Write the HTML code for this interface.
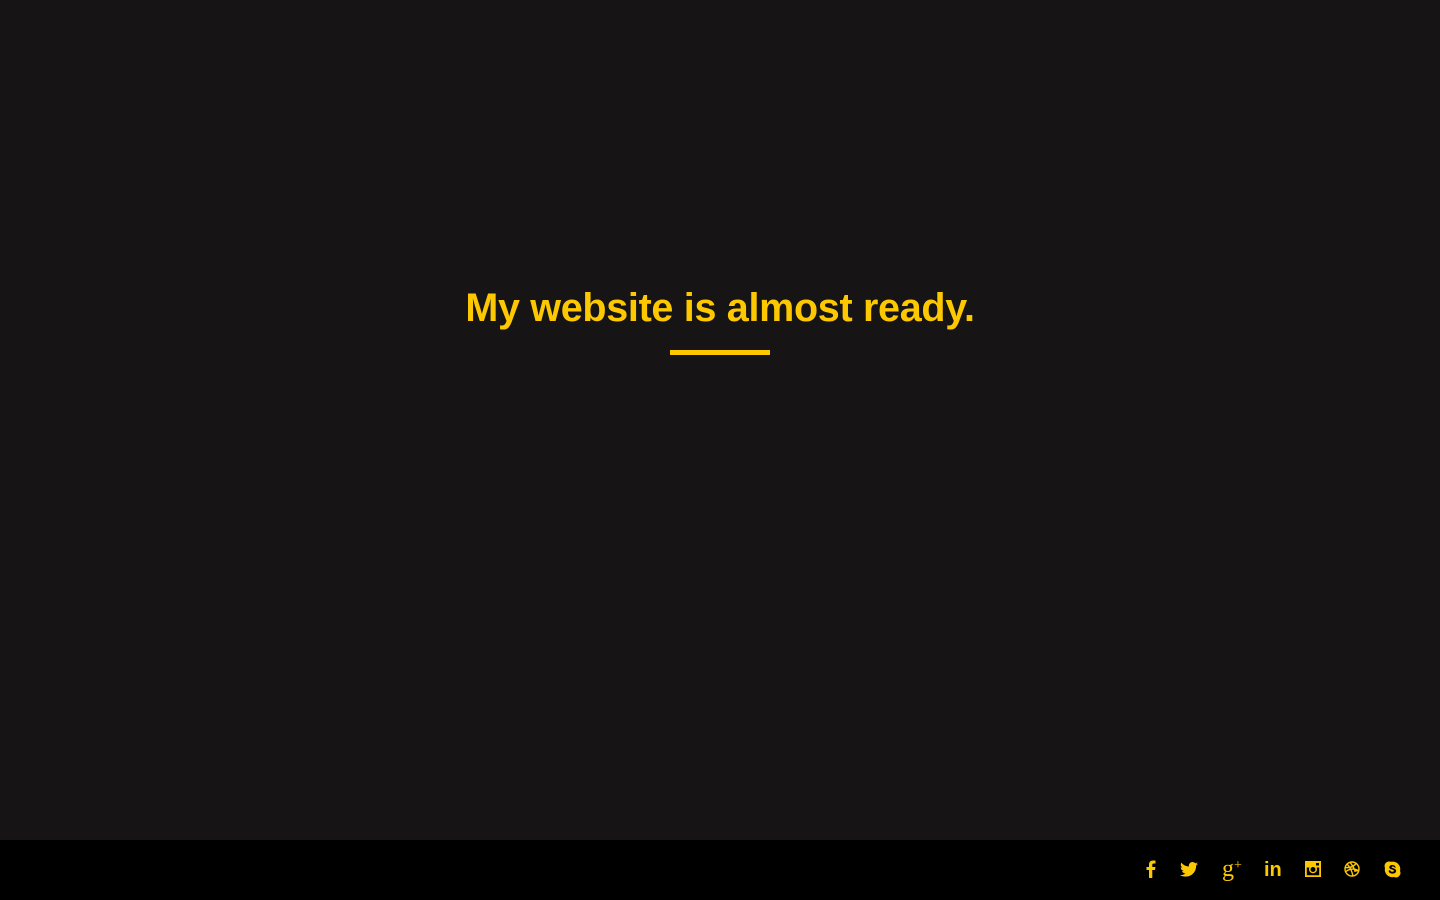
<!DOCTYPE html>
<html><head><style>
html,body{margin:0;padding:0;width:1440px;height:900px;background:#161415;overflow:hidden;font-family:"Liberation Sans",sans-serif}
h1{position:absolute;top:285px;left:0;width:1440px;text-align:center;margin:0;color:#fdc800;font-size:39.5px;font-weight:bold;line-height:46px;letter-spacing:-0.3px}
.bar{position:absolute;left:670px;top:350px;width:100px;height:5px;background:#fdc800}
.foot{position:absolute;left:0;top:840px;width:1440px;height:60px;background:#000}
.ic{position:absolute;top:860px;color:#fdc800;fill:#fdc800}
</style></head><body>
<h1>My website is almost ready.</h1>
<div class="bar"></div>
<div class="foot"></div>
<svg class="ic" style="left:1145px" width="12" height="18" viewBox="0 0 12 18"><path d="M4 18V10H1.5V7H4V4.5C4 2 5.5 0.5 8 0.5H10.5V3.5H8.8C7.6 3.5 7.3 4 7.3 5V7H10.5L10 10H7.3V18Z"/></svg>
<svg class="ic" style="left:1180px;top:862px" width="18" height="15" viewBox="0 0 24 20"><path d="M24 2.4c-.9.4-1.8.6-2.8.8 1-.6 1.800-1.6 2.2-2.7-1 .6-2 1-3.1 1.2C19.4.7 18.1 0 16.7 0c-2.7 0-4.9 2.2-4.9 4.9 0 .4 0 .8.1 1.1C7.7 5.8 4.1 3.9 1.7.9c-.4.7-.7 1.6-.7 2.5 0 1.7.9 3.200 2.2 4.1-.8 0-1.6-.2-2.2-.6v.1c0 2.4 1.7 4.4 3.9 4.8-.4.1-.8.2-1.3.2-.3 0-.6 0-.9-.1.6 2 2.4 3.4 4.6 3.4-1.7 1.3-3.8 2.1-6.1 2.1-.4 0-.8 0-1.2-.1 2.2 1.4 4.8 2.2 7.5 2.2 9.1 0 14-7.5 14-14v-.6c1-.7 1.8-1.6 2.5-2.5z"/></svg>
<div class="ic" style="left:1222px;top:853px;font-family:'Liberation Serif',serif;font-size:24px;line-height:26px">g<span style="font-size:14px;vertical-align:7px">+</span></div>
<div class="ic" style="left:1264px;top:858px;font-weight:bold;font-size:20px;line-height:24px">in</div>
<svg class="ic" style="left:1305px;top:861px" width="16" height="16" viewBox="0 0 16 16"><path fill-rule="evenodd" d="M0 0H16V16H0ZM1.8 6.5V14.2H14.2V6.5H11.6A4 4 0 1 1 4.4 6.5ZM5.5 8.5A2.5 2.5 0 1 0 10.5 8.5A2.5 2.5 0 1 0 5.5 8.5ZM11 2V4.5H14V2Z"/></svg>
<svg class="ic" style="left:1344px;top:861px;fill:none" width="16" height="16" viewBox="0 0 16 16" stroke="#fdc800" stroke-width="1.4"><circle cx="8" cy="8" r="7"/><path d="M3 3c3 3 5 7 6 12M1.2 6.5c4 .5 8-.5 11-4M6 1.2c3 4 4.5 7 5 9 1.5-.7 3-.7 3.8 0M1.5 11c3-3 8-4 13-1.5"/></svg>
<svg class="ic" style="left:1384px;top:861px" width="17" height="17" viewBox="0 0 17 17"><path fill-rule="evenodd" d="M5 0.5A4.5 4.5 0 0 0 1 7a7.5 7.5 0 0 0 9 9A4.5 4.5 0 0 0 16 10a7.5 7.5 0 0 0-9-9.2A4.5 4.5 0 0 0 5 .5ZM11.5 6C11 4.5 9.8 4 8.3 4 6.5 4 5.3 5 5.3 6.3c0 2.7 4.6 1.9 4.6 3.5 0 .6-.6 1-1.5 1-1.7 0-1.6-1.6-2.8-1.6-.6 0-.9.4-.9.9 0 1.3 1.7 2.5 3.900 2.5 2.2 0 3.5-1.1 3.5-2.7 0-3-4.6-2.4-4.6-3.6 0-.5.5-.8 1.2-.8 1.4 0 1.4 1.1 2.3 1.1.6 0 1-.4.5-.6Z"/></svg>
</body></html>
